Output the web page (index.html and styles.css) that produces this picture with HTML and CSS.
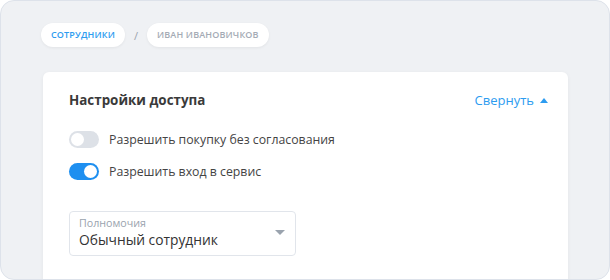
FILE: index.html
```html
<!DOCTYPE html>
<html lang="ru">
<head>
    <meta charset="UTF-8">
    <title>Настройки доступа</title>
    <link rel="stylesheet" href="styles.css">
</head>
<body>
    <div class="frame">
        <nav class="crumbs">
            <a class="chip active" href="#">Сотрудники</a>
            <span class="sep">/</span>
            <span class="chip">Иван Ивановичков</span>
        </nav>

        <div class="card">
            <div class="card-head">
                <h2>Настройки доступа</h2>
                <a class="collapse" href="#">Свернуть <span class="tri"></span></a>
            </div>

            <label class="switch-row">
                <span class="switch"></span>
                Разрешить покупку без согласования
            </label>
            <label class="switch-row">
                <span class="switch on"></span>
                Разрешить вход в сервис
            </label>

            <div class="select">
                <div class="select-text">
                    <span class="select-label">Полномочия</span>
                    <span class="select-value">Обычный сотрудник</span>
                </div>
                <span class="select-arrow"></span>
            </div>
        </div>
    </div>
</body>
</html>
```

FILE: styles.css
```css
html, body {
    margin: 0;
    background: #fff;
}
body {
    font-family: "Open Sans", Arial, sans-serif;
    color: #333;
}
.frame {
    box-sizing: border-box;
    width: 610px;
    height: 280px;
    background: #eff1f4;
    border: 1px solid #dde2ea;
    border-radius: 14px;
    padding: 22px 41px 0 40px;
    overflow: hidden;
}
.crumbs {
    display: flex;
    align-items: center;
    gap: 9px;
    height: 24px;
}
.chip {
    display: inline-block;
    background: #fff;
    border-radius: 12px;
    padding: 0 10px;
    height: 24px;
    line-height: 24px;
    font-size: 9px;
    font-weight: 600;
    letter-spacing: 0.15px;
    text-transform: uppercase;
    color: #a4abb5;
    text-decoration: none;
    box-shadow: 0 1px 3px rgba(0, 0, 0, 0.06);
}
.chip.active {
    color: #2d9cf0;
}
.sep {
    font-size: 11px;
    color: #9aa3ae;
}
.card {
    margin-top: 25px;
    margin-left: 2px;
    background: #fff;
    border-radius: 6px;
    box-shadow: 0 1px 4px rgba(0, 0, 0, 0.05);
    padding: 19px 20px 30px 26px;
    height: 220px;
}
.card-head {
    display: flex;
    justify-content: space-between;
    align-items: center;
    margin-bottom: 21px;
}
h2 {
    margin: 0;
    font-size: 13.4px;
    font-weight: 700;
    color: #3a3a3a;
}
.collapse {
    color: #2d9cf0;
    font-size: 13px;
    text-decoration: none;
    display: flex;
    align-items: center;
    gap: 6px;
}
.tri {
    width: 0;
    height: 0;
    border-left: 4px solid transparent;
    border-right: 4px solid transparent;
    border-bottom: 5px solid #2d9cf0;
}
.switch-row {
    display: flex;
    align-items: center;
    gap: 10px;
    font-size: 12.3px;
    color: #444;
    height: 18px;
    margin-bottom: 14px;
}
.switch {
    position: relative;
    width: 30px;
    height: 17px;
    border-radius: 9px;
    background: #dde1e7;
}
.switch::after {
    content: "";
    position: absolute;
    top: 2px;
    left: 2px;
    width: 13px;
    height: 13px;
    border-radius: 50%;
    background: #fff;
}
.switch.on {
    background: #1e8ff0;
}
.switch.on::after {
    left: 15px;
}
.select {
    margin-top: 31px;
    width: 227px;
    height: 45px;
    box-sizing: border-box;
    border: 1px solid #e1e5eb;
    border-radius: 4px;
    display: flex;
    align-items: center;
    justify-content: space-between;
    padding: 0 10px 0 9px;
}
.select-text {
    display: flex;
    flex-direction: column;
}
.select-label {
    font-size: 10.7px;
    color: #9aa3ae;
    line-height: 13px;
}
.select-value {
    font-size: 13.8px;
    color: #333;
    line-height: 20px;
}
.select-arrow {
    width: 0;
    height: 0;
    border-left: 5px solid transparent;
    border-right: 5px solid transparent;
    border-top: 5px solid #9aa3ae;
    margin-top: -2px;
}
```
